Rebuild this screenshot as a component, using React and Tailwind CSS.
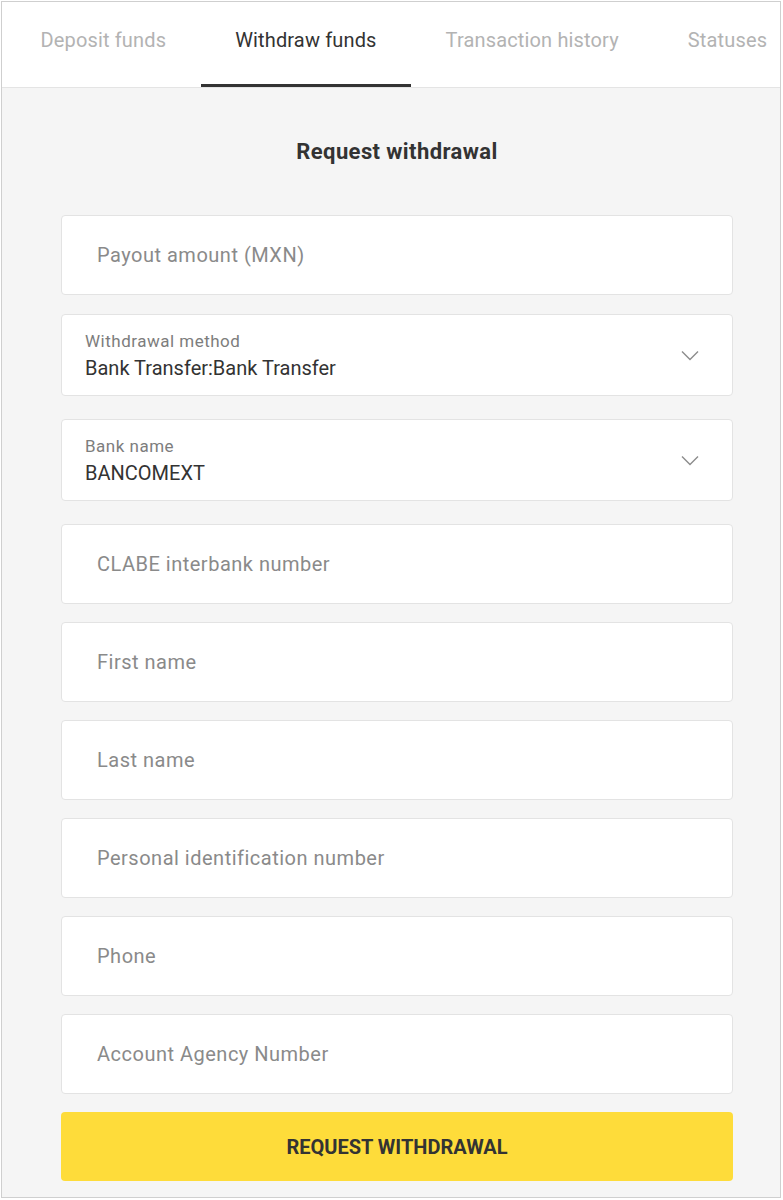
import React from "react";

const tabs = ["Deposit funds", "Withdraw funds", "Transaction history", "Statuses"];

function Chevron() {
  return (
    <svg width="18" height="11" viewBox="0 0 18 11" fill="none" className="shrink-0">
      <path d="M1 1.5l8 8 8-8" stroke="#8c8c8c" strokeWidth="1.4" />
    </svg>
  );
}

function TextField({ label, className }) {
  return (
    <div
      className={
        "h-[80px] flex items-center pl-[35px] bg-white border border-[#e3e3e3] rounded-[4px] " + className
      }
    >
      <span className="text-[20px] tracking-[0.5px] text-[#8a8a8a]">{label}</span>
    </div>
  );
}

function SelectField({ label, value, className }) {
  return (
    <div
      className={
        "h-[82px] flex items-center justify-between pl-[23px] pr-[33px] bg-white border border-[#e3e3e3] rounded-[4px] " +
        className
      }
    >
      <div className="flex flex-col self-start pt-[16px]">
        <span className="text-[17px] leading-[20px] tracking-[0.5px] text-[#7d7d7d]">{label}</span>
        <span className="mt-[3px] text-[20px] leading-[28px] text-[#333]">{value}</span>
      </div>
      <Chevron />
    </div>
  );
}

export default function App() {
  return (
    <div className="w-[783px] h-[1200px] bg-white pt-px pl-px font-['Roboto',sans-serif]">
      <div className="w-[780px] h-[1197px] border border-[#cfcfcf] bg-[#f5f5f5] overflow-hidden">
        {/* tabs */}
        <div className="h-[86px] bg-white border-b border-[#e4e4e4] flex pl-[4px] overflow-hidden whitespace-nowrap">
          {tabs.map((t, i) => (
            <div
              key={t}
              className={
                "flex items-center px-[34.5px] pb-[6px] text-[20px] tracking-[0.15px] border-b-[3px] " +
                (i === 1 ? "text-[#333] border-[#333]" : "text-[#b3b3b3] border-transparent")
              }
            >
              {t}
            </div>
          ))}
        </div>

        <div className="pl-[59px] pr-[47px]">
          <h1 className="pt-[52px] text-center text-[22px] leading-[24px] tracking-[0.4px] font-bold text-[#333]">
            Request withdrawal
          </h1>

          <div className="flex flex-col mt-[51px]">
            <TextField label="Payout amount (MXN)" />
            <SelectField className="mt-[19px]" label="Withdrawal method" value="Bank Transfer:Bank Transfer" />
            <SelectField className="mt-[23px]" label="Bank name" value="BANCOMEXT" />
            <TextField className="mt-[23px]" label="CLABE interbank number" />
            <TextField className="mt-[18px]" label="First name" />
            <TextField className="mt-[18px]" label="Last name" />
            <TextField className="mt-[18px]" label="Personal identification number" />
            <TextField className="mt-[18px]" label="Phone" />
            <TextField className="mt-[18px]" label="Account Agency Number" />
            <button className="mt-[18px] h-[69px] rounded-[4px] bg-[#fedc3a] text-[20px] font-bold text-[#333] uppercase">
              Request withdrawal
            </button>
          </div>
        </div>
      </div>
    </div>
  );
}
